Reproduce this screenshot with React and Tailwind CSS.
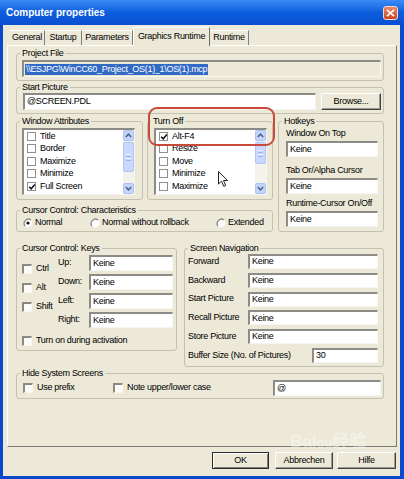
import React from 'react'

const fieldBorder =
  'border-t-2 border-l-2 border-r border-b border-t-[#8c8b86] border-l-[#8c8b86] border-r-[#f6f5f0] border-b-[#f6f5f0]'

function Group({ label, className = '', inner = '', children }) {
  return (
    <fieldset className={`border border-[#c4c1b1] rounded-[3px] min-w-0 ${className}`}>
      <legend className="ml-[3px] px-[2px] leading-[11px]">{label}</legend>
      <div className={inner}>{children}</div>
    </fieldset>
  )
}

function Field({ value, className = '' }) {
  return (
    <div className={`flex items-center bg-white pl-[2px] ${fieldBorder} ${className}`}>
      {value}
    </div>
  )
}

function ListCheck({ checked }) {
  return (
    <span className="relative w-[9px] h-[9px] shrink-0 bg-white border border-[#8f9090]">
      {checked && (
        <svg width="8" height="8" viewBox="0 0 8 8" className="absolute left-0 top-0">
          <path d="M1.2 3.8 L3.2 5.8 L6.8 1.6" fill="none" stroke="#111" strokeWidth="1.5" />
        </svg>
      )}
    </span>
  )
}

function Check({ label, className = '' }) {
  return (
    <div className={`flex items-center h-[11px] ${className}`}>
      <span className="w-[10px] h-[10px] shrink-0 bg-[#fbfbf8] border-t-2 border-l-2 border-t-[#8a8985] border-l-[#8a8985] border-r border-b border-r-[#f7f6f1] border-b-[#f7f6f1]" />
      <span className="ml-[4px] whitespace-nowrap">{label}</span>
    </div>
  )
}

function Radio({ label, checked, className = '' }) {
  return (
    <div className={`flex items-center h-[11px] ${className}`}>
      <svg width="10" height="10" viewBox="0 0 10 10" className="shrink-0">
        <circle cx="5" cy="5" r="4.3" fill="#ffffff" />
        <path d="M8 2 A4.3 4.3 0 0 0 2 8" fill="none" stroke="#8a8985" strokeWidth="1.3" />
        {checked && <circle cx="5" cy="5" r="1.6" fill="#111" />}
      </svg>
      <span className="ml-[2px] whitespace-nowrap">{label}</span>
    </div>
  )
}

function Arrow({ up }) {
  return (
    <div className="h-[11px] rounded-[2px] bg-[#c4d4fb] border border-[#aec3f3] flex items-center justify-center">
      <svg width="7" height="5" viewBox="0 0 7 5">
        <path
          d={up ? 'M0.8 4 L3.5 1.2 L6.2 4' : 'M0.8 1 L3.5 3.8 L6.2 1'}
          fill="none"
          stroke="#4d6185"
          strokeWidth="1.5"
        />
      </svg>
    </div>
  )
}

function ScrollBar({ thumb }) {
  return (
    <div className="w-[11px] shrink-0 flex flex-col bg-[#f3f2ec]">
      <Arrow up />
      <div
        className={`${thumb} mt-[1px] rounded-[2px] bg-[#c9d8fc] border border-[#b1c5f4] flex flex-col items-center justify-center gap-[1px]`}
      >
        <span className="w-[5px] h-px bg-[#eef3ff]" />
        <span className="w-[5px] h-px bg-[#9bb2e8]" />
        <span className="w-[5px] h-px bg-[#eef3ff]" />
        <span className="w-[5px] h-px bg-[#9bb2e8]" />
      </div>
      <div className="flex-1" />
      <Arrow />
    </div>
  )
}

function ListBox({ items, checked, thumb }) {
  return (
    <div className={`h-[67px] w-[113px] flex bg-white overflow-hidden ${fieldBorder}`}>
      <div className="flex-1 overflow-hidden">
        {items.map((it) => (
          <div key={it} className="h-[12.5px] flex items-center pl-[3px]">
            <ListCheck checked={checked.includes(it)} />
            <span className="ml-[4px] whitespace-nowrap">{it}</span>
          </div>
        ))}
        {/* partly scrolled-in next row */}
        <div className="h-[12.5px] flex items-center pl-[3px]">
          <ListCheck />
        </div>
      </div>
      <ScrollBar thumb={thumb} />
    </div>
  )
}

function Button({ label, w, def }) {
  return (
    <div
      className={`${w} h-[17px] flex items-center justify-center bg-[#ece9d8] ${
        def
          ? 'border border-[#2a2a2a] shadow-[inset_1px_1px_#ffffff,inset_-1px_-1px_#808080]'
          : 'border-t border-l border-t-white border-l-white border-r border-b border-r-[#404040] border-b-[#404040] shadow-[inset_-1px_-1px_#9a9a96]'
      }`}
    >
      {label}
    </div>
  )
}

const tabs = [
  { label: 'General', w: 'w-[35px]' },
  { label: 'Startup', w: 'w-[37px]' },
  { label: 'Parameters', w: 'w-[51px]' },
  { label: 'Graphics Runtime', w: 'w-[77px]', sel: true },
  { label: 'Runtime', w: 'w-[39px]' },
]

export default function App() {
  return (
    <div className="relative w-[404px] h-[479px] flex flex-col overflow-hidden bg-[#0a48cc] font-['Liberation_Sans',Arial,sans-serif] text-[9px] tracking-[-0.3px] text-black">
      {/* title bar */}
      <div className="h-[25px] shrink-0 flex items-center pl-[6px] pr-[6px] bg-gradient-to-b from-[#3b8cf6] via-[#0c5ddd] to-[#0a50d0]">
        <span className="text-white font-bold text-[10px] tracking-normal">Computer properties</span>
        <div className="ml-auto w-[15px] h-[14px] rounded-[3px] border border-[#f4d6cc] bg-gradient-to-b from-[#e98864] to-[#c9431f] flex items-center justify-center">
          <svg width="9" height="8" viewBox="0 0 9 8">
            <path d="M1 0.8 L8 7.2 M8 0.8 L1 7.2" stroke="#ffffff" strokeWidth="1.6" />
          </svg>
        </div>
      </div>

      {/* client area */}
      <div className="flex-1 ml-[3px] mr-[4px] mb-[3px] bg-[#ece9d8] flex flex-col pl-[4px] pr-[3px] pt-[3px]">
        {/* tabs */}
        <div className="h-[17px] flex items-end pl-[3px] relative z-10">
          {tabs.map((t) =>
            t.sel ? (
              <div
                key={t.label}
                className={`${t.w} h-[19px] -mb-[1px] self-end flex items-center justify-center bg-[#ece9d8] border-t border-l border-t-white border-l-white border-r border-r-[#6e6e6a] whitespace-nowrap`}
              >
                {t.label}
              </div>
            ) : (
              <div
                key={t.label}
                className={`${t.w} h-[15px] flex items-center justify-center border-r border-r-[#7d7d79] border-t border-t-white whitespace-nowrap`}
              >
                {t.label}
              </div>
            )
          )}
        </div>

        {/* tab panel */}
        <div className="h-[402px] shrink-0 flex flex-col pl-[8px] pr-[12px] pt-[2px] border-t border-l border-t-white border-l-white border-r border-b border-r-[#7a7a76] border-b-[#7a7a76]">
          <Group label="Project File" inner="pl-[5px] pr-[2px] pt-[1px] pb-[3px]">
            <div className={`h-[17px] flex items-center bg-[#ece9d8] pl-[1px] ${fieldBorder}`}>
              <span className="bg-[#316ac5] text-white px-[1px] leading-[11px]">
                {'\\\\ESJPG\\WinCC60_Project_OS(1)_1\\OS(1).mcp'}
              </span>
            </div>
          </Group>

          <Group label="Start Picture" className="mt-[1px]" inner="flex pl-[6px] pr-[2px] pb-[3px]">
            <Field value="@SCREEN.PDL" className="h-[17px] w-[294px]" />
            <div className="ml-[5px] w-[60px]">
              <Button label="Browse..." w="w-[60px]" />
            </div>
          </Group>

          <div className="mt-[2px] flex">
            <div className="w-[257px] flex flex-col">
              <div className="flex">
                <Group label="Window Attributes" className="w-[127px]" inner="pl-[5px] pt-[1px] pb-[4px]">
                  <ListBox
                    items={['Title', 'Border', 'Maximize', 'Minimize', 'Full Screen']}
                    checked={['Full Screen']}
                    thumb="h-[30px]"
                  />
                </Group>
                <Group label="Turn Off" className="w-[126px] ml-[4px]" inner="pl-[6px] pt-[1px] pb-[4px]">
                  <ListBox
                    items={['Alt-F4', 'Resize', 'Move', 'Minimize', 'Maximize']}
                    checked={['Alt-F4']}
                    thumb="h-[22px]"
                  />
                </Group>
              </div>
              <Group label="Cursor Control: Characteristics" className="mt-[5px]" inner="flex pl-[6px] pt-[1px] pb-[3px]">
                <Radio label="Normal" checked className="w-[67px]" />
                <Radio label="Normal without rollback" className="w-[126px]" />
                <Radio label="Extended" />
              </Group>
            </div>

            <Group label="Hotkeys" className="w-[106px] ml-[5px]" inner="flex flex-col pl-[7px] pr-[5px] pt-[1px]">
              <div className="h-[11px] leading-[11px] whitespace-nowrap">Window On Top</div>
              <Field value="Keine" className="h-[16px] mt-[2px]" />
              <div className="h-[11px] leading-[11px] mt-[8px] whitespace-nowrap">Tab Or/Alpha Cursor</div>
              <Field value="Keine" className="h-[16px] mt-[2px]" />
              <div className="h-[11px] leading-[11px] mt-[4px] whitespace-nowrap">Runtime-Cursor On/Off</div>
              <Field value="Keine" className="h-[16px] mt-[2px]" />
            </Group>
          </div>

          <div className="mt-[11px] flex items-start">
            <Group label="Cursor Control: Keys" className="w-[161px]" inner="pl-[5px] pr-[3px] pt-[1px] pb-[4px]">
              <div className="flex">
                <div className="w-[36px] pt-[4px] flex flex-col">
                  {['Ctrl', 'Alt', 'Shift'].map((k) => (
                    <div key={k} className="h-[19px] flex items-center">
                      <Check label={k} />
                    </div>
                  ))}
                </div>
                <div className="flex flex-col gap-[3px]">
                  {['Up:', 'Down:', 'Left:', 'Right:'].map((k) => (
                    <div key={k} className="flex items-center">
                      <span className="w-[31px]">{k}</span>
                      <Field value="Keine" className="h-[16px] w-[84px]" />
                    </div>
                  ))}
                </div>
              </div>
              <Check label="Turn on during activation" className="mt-[7px]" />
            </Group>

            <Group label="Screen Navigation" className="w-[200px] ml-[7px]" inner="flex flex-col gap-[3.8px] pl-[3px] pr-[5px] pb-[3px]">
              {['Forward', 'Backward', 'Start Picture', 'Recall Picture', 'Store Picture'].map((k) => (
                <div key={k} className="flex items-center">
                  <span className="w-[60px] whitespace-nowrap">{k}</span>
                  <Field value="Keine" className="h-[15px] flex-1" />
                </div>
              ))}
              <div className="flex items-center">
                <span className="flex-1 whitespace-nowrap">Buffer Size (No. of Pictures)</span>
                <Field value="30" className="h-[15px] w-[66px]" />
              </div>
            </Group>
          </div>

          <Group label="Hide System Screens" className="mt-[1px]" inner="flex items-center pl-[6px] pr-[2px] pt-[1px] pb-[2px]">
            <Check label="Use prefix" className="w-[90px]" />
            <Check label="Note upper/lower case" />
            <Field value="@" className="ml-auto h-[16px] w-[108px]" />
          </Group>
        </div>

        {/* buttons */}
        <div className="mt-[5px] mr-[1px] flex justify-end">
          <Button label="OK" w="w-[57px]" def />
          <div className="ml-[6px]">
            <Button label="Abbrechen" w="w-[58px]" />
          </div>
          <div className="ml-[4px]">
            <Button label="Hilfe" w="w-[59px]" />
          </div>
        </div>
      </div>

      {/* red highlight around Alt-F4 */}
      <div className="absolute left-[148px] top-[107px] w-[127px] h-[39px] border-2 border-[#c9493a] rounded-[9px] pointer-events-none" />

      {/* mouse pointer */}
      <svg width="11" height="17" viewBox="0 0 11 17" className="absolute left-[218px] top-[171px]">
        <path d="M0.5 0.5 L0.5 13 L3.5 10.2 L5.8 15.3 L7.7 14.5 L5.5 9.5 L9.6 9.5 Z" fill="#ffffff" stroke="#222" strokeWidth="1" />
      </svg>

      {/* watermark */}
      <div className="absolute left-[290px] top-[429px] text-[17px] font-bold text-white opacity-40 tracking-normal font-['Liberation_Sans','Noto_Sans_CJK_SC',sans-serif] pointer-events-none">
        Bai<span className="text-[13px]">du</span>经验
      </div>
    </div>
  )
}
